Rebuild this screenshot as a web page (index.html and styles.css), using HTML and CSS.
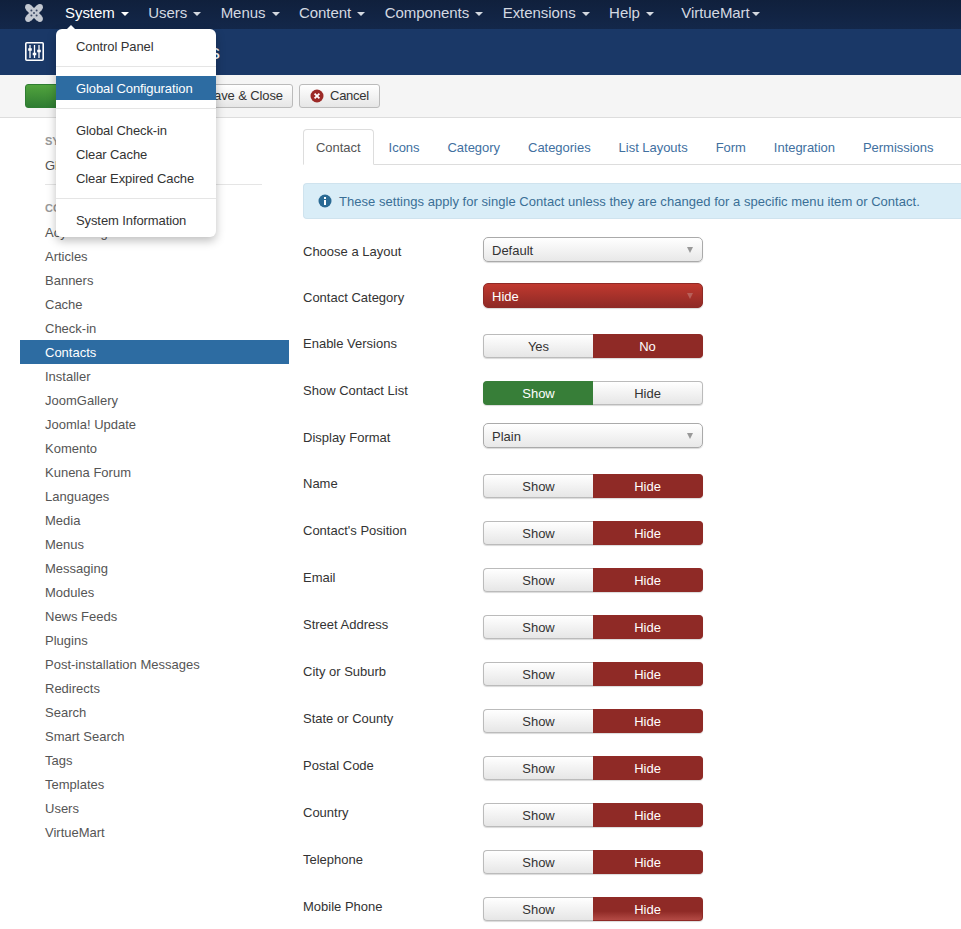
FILE: index.html
```html
<!DOCTYPE html>
<html lang="en">
<head>
<meta charset="UTF-8">
<meta name="viewport" content="width=device-width, initial-scale=1.0">
<title>Contacts: Options</title>
<link rel="stylesheet" href="styles.css">
</head>
<body>

<!-- Top navigation -->
<nav class="navbar">
  <a class="brand" href="#">
    <svg width="18" height="18" viewBox="0 0 18 18">
      <path d="M3.5 3.5 L14.5 14.5 M14.5 3.5 L3.5 14.5" stroke="#c3c8d1" stroke-width="7"/>
      <circle cx="3.2" cy="3.2" r="3.1" fill="#c3c8d1"/>
      <circle cx="14.8" cy="3.2" r="3.1" fill="#c3c8d1"/>
      <circle cx="3.2" cy="14.8" r="3.1" fill="#c3c8d1"/>
      <circle cx="14.8" cy="14.8" r="3.1" fill="#c3c8d1"/>
      <circle cx="6.4" cy="6.4" r="1" fill="#3a4763"/>
      <circle cx="11.6" cy="6.4" r="1" fill="#3a4763"/>
      <circle cx="6.4" cy="11.6" r="1" fill="#3a4763"/>
      <circle cx="11.6" cy="11.6" r="1" fill="#3a4763"/>
      <circle cx="9" cy="9" r="1" fill="#3a4763"/>
    </svg>
  </a>
  <ul class="nav-menu">
    <li class="nav-item nav-item-open">
      <a href="#">System <span class="caret"></span></a>
      <ul class="dropdown">
        <li><a href="#">Control Panel</a></li>
        <li class="divider"></li>
        <li class="active"><a href="#">Global Configuration</a></li>
        <li class="divider"></li>
        <li><a href="#">Global Check-in</a></li>
        <li><a href="#">Clear Cache</a></li>
        <li><a href="#">Clear Expired Cache</a></li>
        <li class="divider"></li>
        <li><a href="#">System Information</a></li>
      </ul>
    </li>
    <li class="nav-item"><a href="#">Users <span class="caret"></span></a></li>
    <li class="nav-item"><a href="#">Menus <span class="caret"></span></a></li>
    <li class="nav-item"><a href="#">Content <span class="caret"></span></a></li>
    <li class="nav-item"><a href="#">Components <span class="caret"></span></a></li>
    <li class="nav-item"><a href="#">Extensions <span class="caret"></span></a></li>
    <li class="nav-item"><a href="#">Help <span class="caret"></span></a></li>
    <li class="nav-item nav-item-vm"><a href="#">VirtueMart<span class="caret"></span></a></li>
  </ul>
</nav>

<!-- Page title -->
<header class="subhead">
  <svg class="title-icon" width="19" height="19" viewBox="0 0 19 19">
    <rect x="0.8" y="0.8" width="17.4" height="17.4" rx="1" fill="none" stroke="#fff" stroke-width="1.6"/>
    <path d="M5 3V16M9.5 3V16M14 3V16" stroke="#fff" stroke-width="1.3"/>
    <path d="M3.2 7.5H6.8M7.7 12H11.3M12.2 9H15.8" stroke="#fff" stroke-width="2.4"/>
  </svg>
  <h1 class="page-title">Contacts: Options</h1>
</header>

<!-- Toolbar -->
<div class="toolbar">
  <button class="btn btn-save" type="button">Save</button>
  <button class="btn btn-save-close" type="button">Save &amp; Close</button>
  <button class="btn btn-cancel" type="button">
    <svg width="14" height="14" viewBox="0 0 14 14">
      <circle cx="7" cy="7" r="6.5" fill="#9c2a27"/>
      <path d="M4.6 4.6L9.4 9.4M9.4 4.6L4.6 9.4" stroke="#fff" stroke-width="1.8"/>
    </svg>
    Cancel
  </button>
</div>

<div class="page">

  <!-- Sidebar -->
  <aside class="sidebar">
    <div class="side-header">System</div>
    <a class="side-link" href="#">Global Configuration</a>
    <hr class="side-rule">
    <div class="side-header">Component</div>
    <a class="side-link" href="#">Acymailing</a>
    <a class="side-link" href="#">Articles</a>
    <a class="side-link" href="#">Banners</a>
    <a class="side-link" href="#">Cache</a>
    <a class="side-link" href="#">Check-in</a>
    <a class="side-link side-link-active" href="#">Contacts</a>
    <a class="side-link" href="#">Installer</a>
    <a class="side-link" href="#">JoomGallery</a>
    <a class="side-link" href="#">Joomla! Update</a>
    <a class="side-link" href="#">Komento</a>
    <a class="side-link" href="#">Kunena Forum</a>
    <a class="side-link" href="#">Languages</a>
    <a class="side-link" href="#">Media</a>
    <a class="side-link" href="#">Menus</a>
    <a class="side-link" href="#">Messaging</a>
    <a class="side-link" href="#">Modules</a>
    <a class="side-link" href="#">News Feeds</a>
    <a class="side-link" href="#">Plugins</a>
    <a class="side-link" href="#">Post-installation Messages</a>
    <a class="side-link" href="#">Redirects</a>
    <a class="side-link" href="#">Search</a>
    <a class="side-link" href="#">Smart Search</a>
    <a class="side-link" href="#">Tags</a>
    <a class="side-link" href="#">Templates</a>
    <a class="side-link" href="#">Users</a>
    <a class="side-link" href="#">VirtueMart</a>
  </aside>

  <!-- Options form -->
  <main class="content">
    <ul class="tabs">
      <li class="tab tab-active"><a href="#">Contact</a></li>
      <li class="tab"><a href="#">Icons</a></li>
      <li class="tab"><a href="#">Category</a></li>
      <li class="tab"><a href="#">Categories</a></li>
      <li class="tab"><a href="#">List Layouts</a></li>
      <li class="tab"><a href="#">Form</a></li>
      <li class="tab"><a href="#">Integration</a></li>
      <li class="tab"><a href="#">Permissions</a></li>
    </ul>

    <div class="alert">
      <svg width="14" height="14" viewBox="0 0 14 14">
        <circle cx="7" cy="7" r="6.5" fill="#2a6a94"/>
        <rect x="6" y="6" width="2" height="5" fill="#fff"/>
        <rect x="6" y="3" width="2" height="2" fill="#fff"/>
      </svg>
      These settings apply for single Contact unless they are changed for a specific menu item or Contact.
    </div>

    <div class="row">
      <label class="row-label">Choose a Layout</label>
      <div class="select">Default</div>
    </div>
    <div class="row">
      <label class="row-label">Contact Category</label>
      <div class="select select-danger">Hide</div>
    </div>
    <div class="row">
      <label class="row-label">Enable Versions</label>
      <div class="toggle"><span class="opt">Yes</span><span class="opt opt-red">No</span></div>
    </div>
    <div class="row">
      <label class="row-label">Show Contact List</label>
      <div class="toggle"><span class="opt opt-green">Show</span><span class="opt">Hide</span></div>
    </div>
    <div class="row">
      <label class="row-label">Display Format</label>
      <div class="select">Plain</div>
    </div>
    <div class="row">
      <label class="row-label">Name</label>
      <div class="toggle"><span class="opt">Show</span><span class="opt opt-red">Hide</span></div>
    </div>
    <div class="row">
      <label class="row-label">Contact's Position</label>
      <div class="toggle"><span class="opt">Show</span><span class="opt opt-red">Hide</span></div>
    </div>
    <div class="row">
      <label class="row-label">Email</label>
      <div class="toggle"><span class="opt">Show</span><span class="opt opt-red">Hide</span></div>
    </div>
    <div class="row">
      <label class="row-label">Street Address</label>
      <div class="toggle"><span class="opt">Show</span><span class="opt opt-red">Hide</span></div>
    </div>
    <div class="row">
      <label class="row-label">City or Suburb</label>
      <div class="toggle"><span class="opt">Show</span><span class="opt opt-red">Hide</span></div>
    </div>
    <div class="row">
      <label class="row-label">State or County</label>
      <div class="toggle"><span class="opt">Show</span><span class="opt opt-red">Hide</span></div>
    </div>
    <div class="row">
      <label class="row-label">Postal Code</label>
      <div class="toggle"><span class="opt">Show</span><span class="opt opt-red">Hide</span></div>
    </div>
    <div class="row">
      <label class="row-label">Country</label>
      <div class="toggle"><span class="opt">Show</span><span class="opt opt-red">Hide</span></div>
    </div>
    <div class="row">
      <label class="row-label">Telephone</label>
      <div class="toggle"><span class="opt">Show</span><span class="opt opt-red">Hide</span></div>
    </div>
    <div class="row">
      <label class="row-label">Mobile Phone</label>
      <div class="toggle"><span class="opt">Show</span><span class="opt opt-red opt-fade">Hide</span></div>
    </div>
  </main>
</div>

</body>
</html>
```

FILE: styles.css
```css
html, body {
  height: 100%;
  overflow: hidden;
}
body {
  margin: 0;
  font-family: "Liberation Sans", Arial, sans-serif;
  font-size: 13px;
  line-height: 18px;
  color: #333;
  background-color: #fff;
}
a {
  text-decoration: none;
  color: inherit;
}
ul {
  list-style: none;
  margin: 0;
  padding: 0;
}

/* navbar */
.navbar {
  display: flex;
  height: 29px;
  background: linear-gradient(#10203c, #13274a);
}
.brand {
  display: flex;
  align-items: center;
  width: 65px;
  height: 25px;
  padding-left: 25px;
  box-sizing: border-box;
}
.nav-menu {
  display: flex;
}
.nav-item {
  position: relative;
  margin-right: 19.4px;
  font-size: 15px;
  letter-spacing: -0.05px;
  line-height: 26px;
  color: #d4d9e1;
}
.nav-item-open {
  color: #fff;
}
.nav-item-vm {
  margin-left: 8px;
}
.caret {
  display: inline-block;
  margin-left: 2px;
  vertical-align: middle;
  border-top: 4px solid currentColor;
  border-left: 4px solid transparent;
  border-right: 4px solid transparent;
}
.dropdown {
  position: absolute;
  top: 29px;
  left: -9px;
  z-index: 10;
  width: 160px;
  padding: 5px 0;
  font-size: 13px;
  letter-spacing: -0.1px;
  line-height: 18px;
  color: #333;
  background-color: #fff;
  border-radius: 6px;
  box-shadow: 0 4px 10px rgba(0, 0, 0, 0.25);
}
.dropdown::before {
  content: "";
  position: absolute;
  top: -4px;
  left: 11px;
  border-bottom: 4px solid #fff;
  border-left: 4px solid transparent;
  border-right: 4px solid transparent;
}
.dropdown a {
  display: block;
  padding: 4px 20px 2px;
}
.dropdown .active a {
  color: #fff;
  background-color: #2d6ca2;
}
.divider {
  height: 1px;
  margin: 8px 0 9px;
  background-color: #e5e5e5;
}

/* title bar */
.subhead {
  display: flex;
  align-items: center;
  height: 46px;
  padding-left: 25px;
  background-color: #1a3867;
}
.title-icon {
  margin-bottom: 2px;
}
.page-title {
  margin: 0 0 0 13px;
  font-size: 20.5px;
  font-weight: normal;
  color: #fff;
}

/* toolbar */
.toolbar {
  display: flex;
  gap: 6px;
  height: 43px;
  padding: 9px 25px 0;
  box-sizing: border-box;
  background-color: #f5f5f5;
  border-bottom: 1px solid #ddd;
}
.btn {
  height: 24px;
  padding: 0 10px;
  font: inherit;
  letter-spacing: -0.1px;
  color: #333;
  background: linear-gradient(#fff, #e6e6e6);
  border: 1px solid #bbb;
  border-radius: 3px;
}
.btn-save {
  width: 100px;
  color: #fff;
  background: linear-gradient(#51a33d, #2f7d32);
  border-color: #2f7d32;
}
.btn-save-close {
  width: 162px;
  padding-right: 9px;
  text-align: right;
}
.btn-cancel {
  display: flex;
  align-items: center;
  gap: 6px;
  letter-spacing: -0.25px;
}

/* layout */
.page {
  display: flex;
}
.sidebar {
  flex: none;
  width: 269px;
  margin-left: 20px;
  padding-top: 14px;
  color: #555;
}
.side-header {
  padding-left: 25px;
  margin-bottom: 3px;
  font-size: 11px;
  font-weight: bold;
  text-transform: uppercase;
  color: #999;
}
.side-link {
  display: block;
  padding: 4px 25px 2px;
}
.side-link-active {
  color: #fff;
  background-color: #2d6ca2;
}
.side-rule {
  width: 217px;
  margin: 7px 0 14px 25px;
  border: 0;
  border-top: 1px solid #e5e5e5;
}
.content {
  flex: 1;
  margin-left: 14px;
  padding-top: 11px;
}

/* tabs */
.tabs {
  display: flex;
  height: 35px;
  gap: 2px;
  letter-spacing: -0.03px;
  border-bottom: 1px solid #ddd;
}
.tab {
  height: 36px;
  padding: 9px 12px 7px;
  box-sizing: border-box;
  color: #41709f;
  border: 1px solid transparent;
  border-radius: 4px 4px 0 0;
}
.tab-active {
  color: #555;
  background-color: #fff;
  border-color: #ddd #ddd #fff;
}

/* info message */
.alert {
  display: flex;
  align-items: center;
  gap: 7px;
  height: 36px;
  margin: 18px 0;
  padding: 2px 0 0 14px;
  box-sizing: border-box;
  letter-spacing: 0.035px;
  color: #3a6f96;
  background-color: #d9edf7;
  border: 1px solid #cfe3ee;
  border-right: 0;
  border-radius: 4px 0 0 4px;
}
.alert svg {
  margin-top: -2px;
}

/* form rows */
.row {
  display: flex;
  margin-bottom: 18px;
}
.row-label {
  flex: none;
  width: 180px;
  padding-top: 6px;
  height: 18px;
}
.select {
  position: relative;
  width: 220px;
  height: 25px;
  margin-bottom: 3px;
  padding: 1px 0 0 8px;
  line-height: 23px;
  box-sizing: border-box;
  background: linear-gradient(#fff, #e8e8e8);
  border: 1px solid #aaa;
  border-radius: 5px;
  box-shadow: 0 1px 1px rgba(0, 0, 0, 0.15);
}
.select::after {
  content: "";
  position: absolute;
  top: 9px;
  right: 9px;
  border-top: 6px solid #999;
  border-left: 3.5px solid transparent;
  border-right: 3.5px solid transparent;
}
.select-danger {
  color: #fff;
  background: linear-gradient(#c0392f, #8f2a26);
  border-color: #8f2a26;
}
.select-danger::after {
  border-top-color: #b8605a;
}
.toggle {
  display: flex;
  width: 220px;
  height: 24px;
  margin-top: 5px;
  border-radius: 4px;
  box-shadow: 0 1px 1px rgba(0, 0, 0, 0.15);
}
.opt {
  flex: 1;
  padding-top: 1px;
  text-align: center;
  background: linear-gradient(#fff, #e6e6e6);
  border: 1px solid #bbb;
  box-sizing: border-box;
  line-height: 22px;
}
.opt:first-child {
  border-right: 0;
  border-radius: 4px 0 0 4px;
}
.opt:last-child {
  border-left: 0;
  border-radius: 0 4px 4px 0;
}
.opt-red {
  color: #fff;
  background: #8f2a26;
  border-color: #8f2a26;
}
.opt-green {
  color: #fff;
  background: #377e38;
  border-color: #377e38;
}
.opt-fade {
  background: linear-gradient(#8f2a26 60%, #b34a45);
}
```
